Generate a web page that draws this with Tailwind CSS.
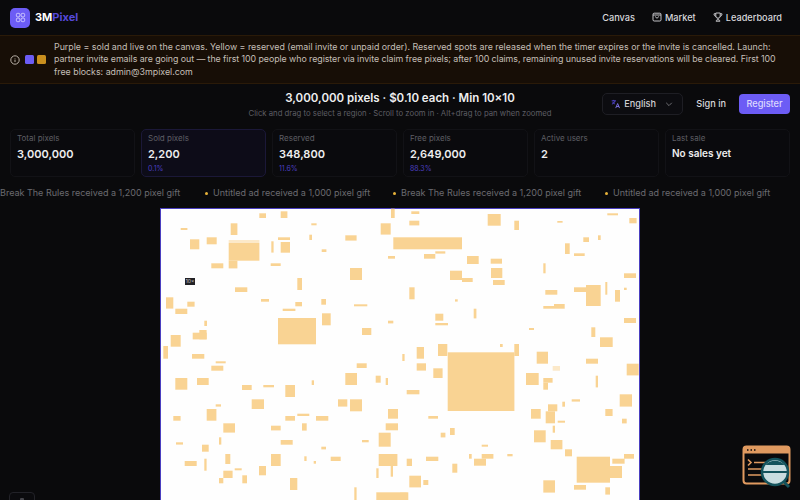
<!DOCTYPE html>
<html lang="en">
<head>
  <meta charset="UTF-8" />
  <meta name="viewport" content="width=device-width, initial-scale=1.0" />
  <title>3MPixel</title>
  <script src="https://cdn.jsdelivr.net/npm/@tailwindcss/browser@4"></script>
</head>
<body class="relative h-[500px] overflow-hidden bg-[#0a0a0c] font-['Inter',sans-serif] text-white">

  <!-- header -->
  <header class="flex h-[35px] items-center justify-between pl-[10px] pr-[18px]">
    <div class="flex items-center gap-[5px]">
      <div class="flex h-5 w-5 items-center justify-center rounded-[5px] bg-[#6c5cf5]">
        <svg width="11" height="11" viewBox="0 0 12 12" fill="none" stroke="#d8d3ff" stroke-width="1"><rect x="1.500" y="1.500" width="3.800" height="3.800" rx="1.200"/><rect x="6.700" y="1.500" width="3.800" height="3.800" rx="1.200"/><rect x="1.500" y="6.700" width="3.800" height="3.800" rx="1.200"/><rect x="6.700" y="6.700" width="3.800" height="3.800" rx="1.200"/></svg>
      </div>
      <span class="text-[11px] font-bold">3M<span class="text-[#5548d8]">Pixel</span></span>
    </div>
    <nav class="flex items-center text-[9.200px] font-medium text-[#d8d8dc]">
      <a class="mr-[17px]">Canvas</a>
      <a class="mr-[17px] flex items-center gap-[3px]">
        <svg width="10" height="10" viewBox="0 0 10 10" fill="none" stroke="#d8d8dc" stroke-width="0.9"><rect x="1" y="1.200" width="8" height="7.800" rx="1.200"/><path d="M1 3h8M3.400 4.400c0 2 3.200 2 3.200 0"/></svg>
        Market
      </a>
      <a class="flex items-center gap-[3px]">
        <svg width="10" height="10" viewBox="0 0 10 10" fill="none" stroke="#d8d8dc" stroke-width="0.9"><path d="M2.800 1h4.400v3a2.200 2.200 0 0 1-4.400 0zM2.800 1.800H1c0 1.600.7 2.400 1.900 2.600M7.200 1.800H9c0 1.600-.7 2.400-1.900 2.600M5 6.200v1.600M3 9.200c.2-1 1-1.400 2-1.400s1.800.4 2 1.400z"/></svg>
        Leaderboard
      </a>
    </nav>
  </header>

  <!-- notice -->
  <div class="flex h-[49px] items-center border-y border-[#2a1a08] bg-[#170e06] pl-[10px] pr-[18px]">
    <svg class="mr-[5px] shrink-0" width="10" height="10" viewBox="0 0 10 10" fill="none" stroke="#c9c2b8" stroke-width="0.9"><circle cx="5" cy="5" r="4.200"/><path d="M5 4.600v2.400M5 3v.5"/></svg>
    <span class="mr-[3px] h-[9px] w-[9px] shrink-0 rounded-[1.500px] bg-[#6c5cf5]"></span>
    <span class="mr-[8px] h-[9px] w-[9px] shrink-0 rounded-[1.500px] bg-[#c98f1e]"></span>
    <p class="text-[8.840px] leading-[12.500px] text-[#c4beb6]">Purple = sold and live on the canvas. Yellow = reserved (email invite or unpaid order). Reserved spots are released when the timer expires or the invite is cancelled. Launch: <span class="tracking-[-0.060px]">partner invite emails are going out — the first 100 people who register via invite claim free pixels; after 100 claims, remaining unused invite reservations will be cleared. First 100</span> free blocks: admin@3mpixel.com</p>
  </div>

  <!-- title bar -->
  <div class="relative flex h-[39px] items-center justify-end pr-[10px] pt-[1px]">
    <div class="absolute inset-x-0 top-[6px] text-center">
      <h1 class="text-[11.500px] font-semibold leading-[16px] text-[#eeeeef]">3,000,000 pixels · $0.10 each · Min 10×10</h1>
      <p class="mt-[1px] text-[7.750px] leading-[12px] text-[#5e5e64]">Click and drag to select a region · Scroll to zoom in · Alt+drag to pan when zoomed</p>
    </div>
    <div class="relative mr-[13px] flex h-[22px] w-[81px] items-center rounded-[5px] border border-[#1e1e24] bg-[#0c0c10] pl-[8px] text-[9.200px] font-medium text-[#d0d0d4]">
      <svg class="mr-[3px]" width="10" height="10" viewBox="0 0 11 11" fill="none" stroke-width="1"><path stroke="#5548d8" d="M.8 2h4.600M3 1v1M4.400 2c-.4 1.800-1.600 3-3.400 3.600M1.800 3.200c.5 1 1.300 1.800 2.400 2.200"/><path stroke="#8378f0" d="M5.200 10l2.100-5 2.100 5M6 8.300h2.800"/></svg>
      English
      <svg class="absolute right-[9px]" width="8" height="8" viewBox="0 0 8 8" fill="none" stroke="#77777d" stroke-width="0.9"><path d="M1.200 2.800 4 5.600l2.800-2.800"/></svg>
    </div>
    <a class="mr-[13px] text-[9.200px] font-medium text-[#d8d8dc]">Sign in</a>
    <a class="flex h-5 w-[51px] items-center justify-center rounded-[4px] bg-[#6c5cf5] text-[9.200px] font-medium text-[#ddd9ff]">Register</a>
  </div>

  <!-- stats -->
  <div class="mt-[6px] grid grid-cols-6 gap-[6px] px-[10px]">
    <div class="h-[48px] rounded-[5px] border border-[#121216] bg-[#0a0a0d] pl-[6px] pt-[3px]">
      <div class="text-[8px] leading-[11px] text-[#5e5e64]">Total pixels</div>
      <div class="mt-[2px] text-[11px] font-semibold leading-[16px] text-[#eeeeef]">3,000,000</div>
    </div>
    <div class="h-[48px] rounded-[5px] border border-[#1b1838] bg-[#0d0c18] pl-[6px] pt-[3px]">
      <div class="text-[8px] leading-[11px] text-[#5e5e64]">Sold pixels</div>
      <div class="mt-[2px] text-[11px] font-semibold leading-[16px] text-[#eeeeef]">2,200</div>
      <div class="mt-[1px] text-[7px] leading-[12px] text-[#4a3fc0]">0.1%</div>
    </div>
    <div class="h-[48px] rounded-[5px] border border-[#121216] bg-[#0a0a0d] pl-[6px] pt-[3px]">
      <div class="text-[8px] leading-[11px] text-[#5e5e64]">Reserved</div>
      <div class="mt-[2px] text-[11px] font-semibold leading-[16px] text-[#eeeeef]">348,800</div>
      <div class="mt-[1px] text-[7px] leading-[12px] text-[#4a3fc0]">11.6%</div>
    </div>
    <div class="h-[48px] rounded-[5px] border border-[#121216] bg-[#0a0a0d] pl-[6px] pt-[3px]">
      <div class="text-[8px] leading-[11px] text-[#5e5e64]">Free pixels</div>
      <div class="mt-[2px] text-[11px] font-semibold leading-[16px] text-[#eeeeef]">2,649,000</div>
      <div class="mt-[1px] text-[7px] leading-[12px] text-[#4a3fc0]">88.3%</div>
    </div>
    <div class="h-[48px] rounded-[5px] border border-[#121216] bg-[#0a0a0d] pl-[6px] pt-[3px]">
      <div class="text-[8px] leading-[11px] text-[#5e5e64]">Active users</div>
      <div class="mt-[2px] text-[11px] font-semibold leading-[16px] text-[#eeeeef]">2</div>
    </div>
    <div class="h-[48px] rounded-[5px] border border-[#121216] bg-[#0a0a0d] pl-[6px] pt-[3px]">
      <div class="text-[8px] leading-[11px] text-[#5e5e64]">Last sale</div>
      <div class="mt-[2px] text-[10px] font-semibold leading-[15px] text-[#eeeeef]">No sales yet</div>
    </div>
  </div>

  <!-- ticker -->
  <div class="mt-[9px] flex h-[14px] items-center overflow-hidden whitespace-nowrap text-[9px] text-[#6a6a70]">
    <span class="w-[205px] shrink-0">Break The Rules received a 1,200 pixel gift</span>
    <span class="mr-[5px] h-[3px] w-[3px] shrink-0 rounded-full bg-[#e8b23a]"></span>
    <span class="w-[180px] shrink-0">Untitled ad received a 1,000 pixel gift</span>
    <span class="mr-[5px] h-[3px] w-[3px] shrink-0 rounded-full bg-[#e8b23a]"></span>
    <span class="w-[204px] shrink-0">Break The Rules received a 1,200 pixel gift</span>
    <span class="mr-[5px] h-[3px] w-[3px] shrink-0 rounded-full bg-[#e8b23a]"></span>
    <span class="shrink-0">Untitled ad received a 1,000 pixel gift</span>
  </div>

  <!-- pixel canvas -->
  <div class="relative mx-auto mt-[8px] h-[300px] w-[480px] border-l border-r border-t border-[#4a3fc0] bg-[#fefefe]">
    <svg class="absolute left-[-1px] top-[-1px]" width="480" height="300" viewBox="160 208 480 300" fill="#f9d393">
      <rect x="259.300" y="213.300" width="6.700" height="4.700"/><rect x="280.700" y="211.300" width="6.700" height="6.700"/><rect x="391" y="208.700" width="3.700" height="9.300"/><rect x="180.700" y="228" width="6.700" height="2"/><rect x="230.700" y="223.300" width="6.700" height="11.700"/><rect x="190" y="239.300" width="9.300" height="10"/><rect x="206.700" y="237.300" width="10" height="7"/><rect x="228.700" y="243" width="30.700" height="17.700"/><rect x="228.700" y="240" width="30.700" height="3" opacity="0.500"/><rect x="228.700" y="260.700" width="8.700" height="7.700"/><rect x="271.300" y="241.300" width="2.300" height="11.300"/><rect x="278" y="237.300" width="12" height="2.700"/><rect x="280.700" y="242" width="9.300" height="10.700"/><rect x="309.300" y="234.700" width="2.700" height="5.300"/><rect x="311.300" y="223.300" width="5.300" height="2"/><rect x="345.300" y="235.300" width="11.300" height="5.300"/><rect x="380.700" y="223.300" width="10" height="11.300"/><rect x="393.300" y="237.300" width="68.700" height="12"/><rect x="321.700" y="249.300" width="4.700" height="2.700"/><rect x="388" y="256" width="7" height="2.700"/><rect x="211.300" y="263.300" width="12" height="5"/><rect x="270.700" y="263.300" width="10" height="2.700"/><rect x="350" y="268" width="12" height="12"/><rect x="297.300" y="278" width="4.700" height="12"/><rect x="235" y="287.300" width="12.300" height="4.700"/><rect x="166" y="297.300" width="7.300" height="11.300"/><rect x="187.300" y="301.700" width="7.300" height="5"/><rect x="175.300" y="308.700" width="12" height="5.300"/><rect x="261" y="299" width="8" height="2.700"/><rect x="295.300" y="302" width="6.700" height="4.300"/><rect x="321.300" y="299" width="4.700" height="5.700"/><rect x="282.700" y="308.700" width="12.700" height="2.300"/><rect x="354" y="304.300" width="13.300" height="2"/><rect x="278" y="318" width="38" height="26.300"/><rect x="322" y="313.300" width="8.700" height="12"/><rect x="204.300" y="320.700" width="2.700" height="5.300"/><rect x="388" y="320.700" width="5.300" height="2.700"/><rect x="362" y="328" width="9.300" height="7"/><rect x="192.700" y="332.700" width="14" height="6.700"/><rect x="199.300" y="330" width="7.300" height="9.300"/><rect x="170.700" y="335" width="10" height="11.700"/>
      <rect x="411.300" y="211.300" width="8" height="2.700"/><rect x="409.300" y="220.700" width="10" height="4.700"/><rect x="487.700" y="214" width="13" height="11.700"/><rect x="514.300" y="220.700" width="4.700" height="9.300"/><rect x="557.300" y="221" width="5.300" height="1.700"/><rect x="607.300" y="213.300" width="10.700" height="2"/><rect x="629.300" y="218" width="7.300" height="5.300"/><rect x="583.300" y="237.300" width="5.700" height="4.700"/><rect x="598" y="235.300" width="2.700" height="4.700"/><rect x="565" y="243.300" width="4.700" height="10.700"/><rect x="574" y="253.300" width="10.700" height="2.700"/><rect x="424" y="254" width="11.300" height="4.700"/><rect x="435.300" y="251.300" width="10" height="2.300"/><rect x="467" y="256" width="11.700" height="8"/><rect x="490.700" y="258.700" width="11.300" height="5"/><rect x="491" y="268" width="11.300" height="10"/><rect x="450" y="270.700" width="12" height="9.300"/><rect x="462" y="278" width="10.700" height="4"/><rect x="493" y="280" width="11.700" height="5"/><rect x="543.300" y="263.300" width="2.300" height="10"/><rect x="624" y="273.300" width="12" height="4.700"/><rect x="409.300" y="287.300" width="5.300" height="12"/><rect x="545.300" y="290" width="12" height="4.700"/><rect x="574" y="287.300" width="12" height="4.700"/><rect x="586" y="285" width="14.700" height="21"/><rect x="605.300" y="282" width="2" height="12.700"/><rect x="615" y="290" width="5" height="11.700"/><rect x="624" y="287.700" width="2.700" height="2.300"/><rect x="455" y="299.300" width="2.700" height="2.300"/><rect x="543.300" y="306" width="10.700" height="2.700"/><rect x="554" y="304" width="10.700" height="4.700"/><rect x="473.700" y="308.700" width="2.700" height="9.700"/><rect x="435.300" y="313.700" width="8" height="7"/><rect x="435.300" y="323" width="12.700" height="2.300"/><rect x="624" y="318" width="12" height="5"/><rect x="529" y="328" width="5" height="2"/><rect x="591.300" y="327.300" width="4" height="9.700"/><rect x="600" y="337.300" width="12.700" height="9.700"/><rect x="416.700" y="347" width="7.300" height="11.700"/><rect x="438" y="344" width="9.300" height="12"/><rect x="500" y="344" width="2.700" height="3"/><rect x="514.300" y="344" width="4.700" height="12"/>
      <rect x="163.300" y="346" width="4.700" height="12.700"/><rect x="192" y="354" width="12.300" height="4.700"/><rect x="215.700" y="361.300" width="10" height="2"/><rect x="211.300" y="365.700" width="12" height="5"/><rect x="356.700" y="363.300" width="10" height="4.700"/><rect x="175.300" y="378" width="12" height="11.700"/><rect x="197" y="378" width="11.700" height="7"/><rect x="345.300" y="373" width="11.700" height="12"/><rect x="375.700" y="375.700" width="5" height="7"/><rect x="385.700" y="378" width="2.300" height="7"/><rect x="311.700" y="380.300" width="2.300" height="4.700"/><rect x="242" y="385" width="9.700" height="5"/><rect x="263.300" y="385" width="10.700" height="2.300"/><rect x="285.300" y="385" width="9.700" height="12"/><rect x="251.700" y="399.300" width="12.300" height="9.700"/><rect x="338" y="399.300" width="9.300" height="7.300"/><rect x="350" y="399.300" width="12" height="12"/><rect x="215.700" y="404.300" width="5.300" height="2.300"/><rect x="206.700" y="409" width="9.700" height="11.700"/><rect x="388" y="409" width="10" height="9.700"/><rect x="297.300" y="413.700" width="12" height="2.300"/><rect x="173.300" y="416" width="7.300" height="4.700"/><rect x="285.300" y="416" width="9.700" height="4.700"/><rect x="316" y="416" width="12.300" height="4.700"/><rect x="302" y="423.300" width="4.700" height="7.300"/><rect x="223.300" y="423.300" width="11.700" height="9.300"/><rect x="271" y="425.700" width="9.700" height="4.700"/><rect x="385.700" y="423.300" width="12.300" height="7"/><rect x="378.700" y="432.700" width="12" height="14"/><rect x="219" y="437.300" width="2.300" height="7.300"/><rect x="280.700" y="440" width="12" height="4.700"/><rect x="362" y="440" width="6.700" height="2.300"/><rect x="176" y="442.300" width="7" height="2.300"/><rect x="202" y="444.700" width="6.700" height="7"/><rect x="321.300" y="446.700" width="4.700" height="2.700"/><rect x="225.300" y="454" width="5" height="10"/><rect x="271" y="454" width="9.700" height="12"/><rect x="304.300" y="456.300" width="2.300" height="4.700"/><rect x="330.700" y="456.700" width="10" height="4.300"/><rect x="378.700" y="454" width="18.700" height="12"/><rect x="184.700" y="461" width="12" height="5"/><rect x="204.300" y="458.700" width="2.300" height="12"/><rect x="313.700" y="461" width="2.300" height="2.700"/><rect x="259" y="466" width="7" height="9.300"/><rect x="234.700" y="468.300" width="7" height="2"/><rect x="223.300" y="470.700" width="9.300" height="7.300"/><rect x="376.300" y="468.300" width="2.300" height="9.700"/><rect x="390.700" y="466" width="2.300" height="10.700"/><rect x="219" y="478" width="4.300" height="5.300"/><rect x="242.300" y="475.300" width="4.700" height="8"/><rect x="290" y="478" width="7.300" height="12"/><rect x="354.300" y="487.300" width="2.300" height="12.700"/><rect x="376.300" y="492.300" width="32" height="8"/>
      <rect x="447.700" y="352.300" width="66.700" height="58.700"/><rect x="402.300" y="354" width="2.300" height="7"/><rect x="416.700" y="363.300" width="9.300" height="7.300"/><rect x="433.300" y="368.300" width="9.300" height="9.700"/><rect x="536.700" y="351.700" width="11.300" height="12"/><rect x="586" y="358.700" width="12" height="5"/><rect x="552.700" y="366" width="7.300" height="4.700" opacity="0.500"/><rect x="626.700" y="363.700" width="12" height="11.700"/><rect x="526" y="373" width="12.700" height="12"/><rect x="543.300" y="378" width="9.300" height="4.700"/><rect x="543.300" y="382.700" width="4.700" height="7"/><rect x="595.700" y="375.700" width="2.300" height="11.700"/><rect x="406.700" y="390" width="12.700" height="4.300"/><rect x="619.700" y="394.300" width="12.300" height="12.300"/><rect x="571.700" y="399.300" width="8.300" height="2.300"/><rect x="562.300" y="401.700" width="2.700" height="5"/><rect x="548" y="404.300" width="9.300" height="7"/><rect x="531" y="409" width="9.700" height="9.700"/><rect x="545.700" y="411.300" width="9.300" height="12"/><rect x="605.300" y="409" width="7.300" height="7"/><rect x="428.300" y="416" width="9.700" height="2.700"/><rect x="622" y="418.700" width="4.700" height="4.700"/><rect x="557.700" y="420.700" width="7.300" height="2"/><rect x="552.700" y="425.700" width="2.300" height="7"/><rect x="450" y="428" width="4.700" height="7"/><rect x="440.700" y="432.700" width="4.700" height="4.700"/><rect x="534" y="430.300" width="11.700" height="12"/><rect x="550.700" y="440" width="11.700" height="9.300"/><rect x="481.700" y="444.700" width="6.300" height="2"/><rect x="565" y="449.300" width="7" height="7"/><rect x="469" y="454" width="2.700" height="4.700"/><rect x="481.700" y="454" width="11.700" height="4.700"/><rect x="507.300" y="454" width="5.300" height="2.300"/><rect x="474" y="458.700" width="12" height="7"/><rect x="426" y="456.700" width="12.300" height="4.300"/><rect x="406.700" y="458.700" width="5.300" height="7.300"/><rect x="576.700" y="456.700" width="33.300" height="26"/><rect x="612.300" y="458.700" width="12.300" height="5"/><rect x="624" y="454" width="10" height="4.700"/><rect x="610" y="466" width="12" height="12"/><rect x="452.300" y="463.700" width="5" height="9"/><rect x="409.300" y="475.700" width="11.700" height="11.700"/><rect x="423.300" y="480" width="5" height="5"/><rect x="574" y="485" width="12" height="4.700"/><rect x="543.300" y="480.300" width="11.700" height="12.300"/><rect x="605.300" y="487.300" width="4.700" height="7.300"/><rect x="400" y="492.700" width="6.700" height="8"/>
    </svg>
    <span class="absolute left-[24px] top-[69px] flex h-[7px] w-[10px] items-center justify-center bg-[#222226] text-[5px] leading-none text-[#cfcfd2]">10×</span>
  </div>

  <!-- zoom control, bottom left -->
  <div class="absolute left-[9px] top-[492px] h-[24px] w-[26px] rounded-[4px] border border-[#222228] bg-[#0b0b0e]">
    <span class="mx-auto mt-[5px] block h-[4px] w-[4px] rounded-[1px] bg-[#44444a]"></span>
  </div>

  <!-- floating help icon -->
  <svg class="absolute left-[741px] top-[445px]" width="52" height="45" viewBox="0 0 52 45" fill="none">
    <rect x="2.500" y="1.500" width="46" height="37" rx="3" stroke="#e09a60" stroke-width="2"/>
    <path d="M2.500 8.500v-4a3 3 0 0 1 3-3h40a3 3 0 0 1 3 3v4z" fill="#e09a60"/>
    <path d="M6 5h1.500M9.500 5H11M13 5h1.500" stroke="#0a0a0c" stroke-width="1.500"/>
    <path d="M7 14.500l3 3-3 3" stroke="#e09a60" stroke-width="1.600"/>
    <path d="M13 17.500h12M7 24h18M7 30h18" stroke="#e09a60" stroke-width="1.600"/>
    <circle cx="34" cy="27" r="13" fill="#c9dde0" stroke="#14535c" stroke-width="2.500"/>
    <path d="M24.500 20a13 13 0 0 1 19 0z" fill="#14535c"/>
    <path d="M22 27h24" stroke="#14535c" stroke-width="2"/>
    <path d="M43 37l5 5" stroke="#14535c" stroke-width="3"/>
  </svg>
</body>
</html>
